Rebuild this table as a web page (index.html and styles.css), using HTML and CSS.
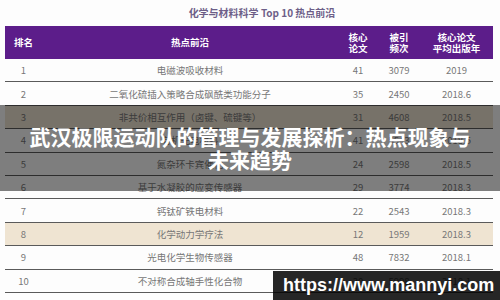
FILE: index.html
```html
<html>
	<head>
		<title>化学与材料科学 Top 10 热点前沿</title>
		<meta name="viewport" content="width=device-width, initial-scale=1.0">
		<link rel="stylesheet" href="styles.css">
	</head>
	<body>
		<div class="page">
			<div class="caption">化学与材料科学 Top 10 热点前沿</div>
			<div class="table">
				<div class="row head">
					<div class="cell">排名</div>
					<div class="cell wide">热点前沿</div>
					<div class="cell">核心<br>论文</div>
					<div class="cell">被引<br>频次</div>
					<div class="cell">核心论文<br>平均出版年</div>
				</div>
				<div class="row">
					<div class="cell">1</div>
					<div class="cell wide">电磁波吸收材料</div>
					<div class="cell">41</div>
					<div class="cell">3079</div>
					<div class="cell">2019</div>
				</div>
				<div class="row">
					<div class="cell">2</div>
					<div class="cell wide">二氧化硫插入策略合成砜酰类功能分子</div>
					<div class="cell">35</div>
					<div class="cell">2450</div>
					<div class="cell">2018.6</div>
				</div>
				<div class="row mark">
					<div class="cell">3</div>
					<div class="cell wide">非共价相互作用（卤键、硫键等）</div>
					<div class="cell">31</div>
					<div class="cell">4608</div>
					<div class="cell">2018.5</div>
				</div>
				<div class="row">
					<div class="cell">4</div>
					<div class="cell wide">有机光电材料</div>
					<div class="cell">41</div>
					<div class="cell">5543</div>
					<div class="cell">2018.5</div>
				</div>
				<div class="row">
					<div class="cell">5</div>
					<div class="cell wide">氮杂环卡宾催化</div>
					<div class="cell">24</div>
					<div class="cell">2598</div>
					<div class="cell">2018.5</div>
				</div>
				<div class="row">
					<div class="cell">6</div>
					<div class="cell wide">基于水凝胶的应变传感器</div>
					<div class="cell">29</div>
					<div class="cell">3774</div>
					<div class="cell">2018.3</div>
				</div>
				<div class="row">
					<div class="cell">7</div>
					<div class="cell wide">钙钛矿铁电材料</div>
					<div class="cell">22</div>
					<div class="cell">2543</div>
					<div class="cell">2018.3</div>
				</div>
				<div class="row mark">
					<div class="cell">8</div>
					<div class="cell wide">化学动力学疗法</div>
					<div class="cell">12</div>
					<div class="cell">1959</div>
					<div class="cell">2018.3</div>
				</div>
				<div class="row">
					<div class="cell">9</div>
					<div class="cell wide">光电化学生物传感器</div>
					<div class="cell">48</div>
					<div class="cell">7832</div>
					<div class="cell">2018.1</div>
				</div>
				<div class="row">
					<div class="cell">10</div>
					<div class="cell wide">不对称合成轴手性化合物</div>
					<div class="cell">30</div>
					<div class="cell">5998</div>
					<div class="cell">2018.1</div>
				</div>
			</div>
			<div class="banner">
				<h1 class="banner-title">武汉极限运动队的管理与发展探析：热点现象与未来趋势</h1>
			</div>
			<div class="watermark">https://www.mannyi.com</div>
		</div>
	</body>
</html>
```

FILE: styles.css
```css
body {
	margin: 0;
	background-color: #ffffff;
	font-family: "Noto Sans CJK SC", "Noto Sans", sans-serif;
}
.page {
	position: relative;
	width: 500px;
	height: 300px;
	overflow: hidden;
	background-color: #fdfdfd;
}
.caption {
	height: 26px;
	line-height: 26px;
	padding-left: 24px;
	text-align: center;
	font-size: 10px;
	font-weight: bold;
	color: #6d5f88;
}
.table {
	margin: 0 7px 0 5px;
}
.row {
	display: grid;
	grid-template-columns: 37px 296px 40px 42px 73px;
	height: 22.4px;
	border-bottom: 1px solid #5a5a5a;
	font-size: 9.5px;
	color: #777777;
}
.row.mark {
	background-color: #efe4d2;
}
.row.head {
	height: 33px;
	border-bottom: none;
	background-color: #5c1d8a;
	color: #ffffff;
	font-weight: bold;
	font-size: 9.5px;
	line-height: 11px;
}
.cell {
	display: flex;
	align-items: center;
	justify-content: center;
	text-align: center;
}
.banner {
	position: absolute;
	left: 0;
	top: 105px;
	width: 500px;
	height: 86px;
	display: flex;
	align-items: center;
	justify-content: center;
	background-color: rgba(0, 0, 0, 0.5);
}
.banner-title {
	margin: 0;
	width: 450px;
	text-align: center;
	font-size: 21px;
	line-height: 23px;
	font-weight: bold;
	color: #ffffff;
}
.watermark {
	position: absolute;
	left: 273px;
	top: 271px;
	width: 227px;
	height: 29px;
	line-height: 29px;
	padding-left: 10px;
	box-sizing: border-box;
	background-color: rgba(0, 0, 0, 0.85);
	color: #ffffff;
	font-family: "Liberation Sans", Arial, sans-serif;
	font-weight: bold;
	font-size: 18px;
}
```
